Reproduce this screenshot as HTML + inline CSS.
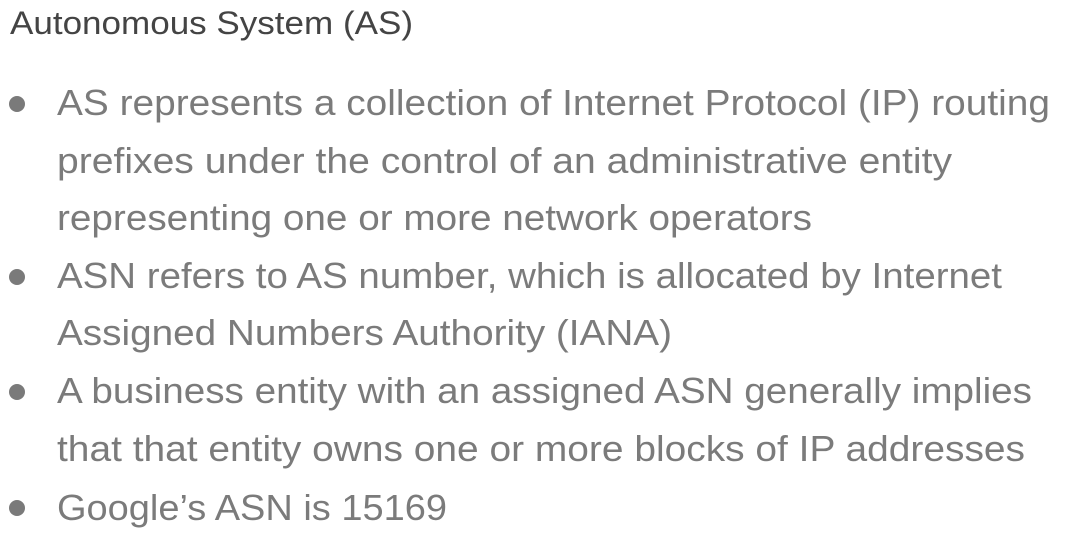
<!DOCTYPE html>
<html><head><meta charset="utf-8"><style>
html,body{margin:0;padding:0;background:#fff;width:1070px;height:536px;overflow:hidden}
svg{display:block}
text{font-family:"Liberation Sans",sans-serif}
</style></head><body>
<svg width="1070" height="536" viewBox="0 0 1070 536">
<text x="10" y="34" font-size="32" fill="#444" textLength="403" lengthAdjust="spacingAndGlyphs">Autonomous System (AS)</text>
<g fill="#7a7a7a">
<circle cx="17" cy="104" r="8"/>
<circle cx="17" cy="277" r="8"/>
<circle cx="17" cy="392" r="8"/>
<circle cx="17" cy="508" r="8"/>
</g>
<g font-size="36" fill="#7b7b7b">
<text x="57" y="115" textLength="993" lengthAdjust="spacingAndGlyphs">AS represents a collection of Internet Protocol (IP) routing</text>
<text x="57" y="173" textLength="895" lengthAdjust="spacingAndGlyphs">prefixes under the control of an administrative entity</text>
<text x="57" y="230" textLength="755" lengthAdjust="spacingAndGlyphs">representing one or more network operators</text>
<text x="57" y="288" textLength="945" lengthAdjust="spacingAndGlyphs">ASN refers to AS number, which is allocated by Internet</text>
<text x="57" y="345" textLength="615" lengthAdjust="spacingAndGlyphs">Assigned Numbers Authority (IANA)</text>
<text x="57" y="403" textLength="975" lengthAdjust="spacingAndGlyphs">A business entity with an assigned ASN generally implies</text>
<text x="57" y="461" textLength="968" lengthAdjust="spacingAndGlyphs">that that entity owns one or more blocks of IP addresses</text>
<text x="57" y="520" textLength="390" lengthAdjust="spacingAndGlyphs">Google’s ASN is 15169</text>
</g>
</svg>
</body></html>
